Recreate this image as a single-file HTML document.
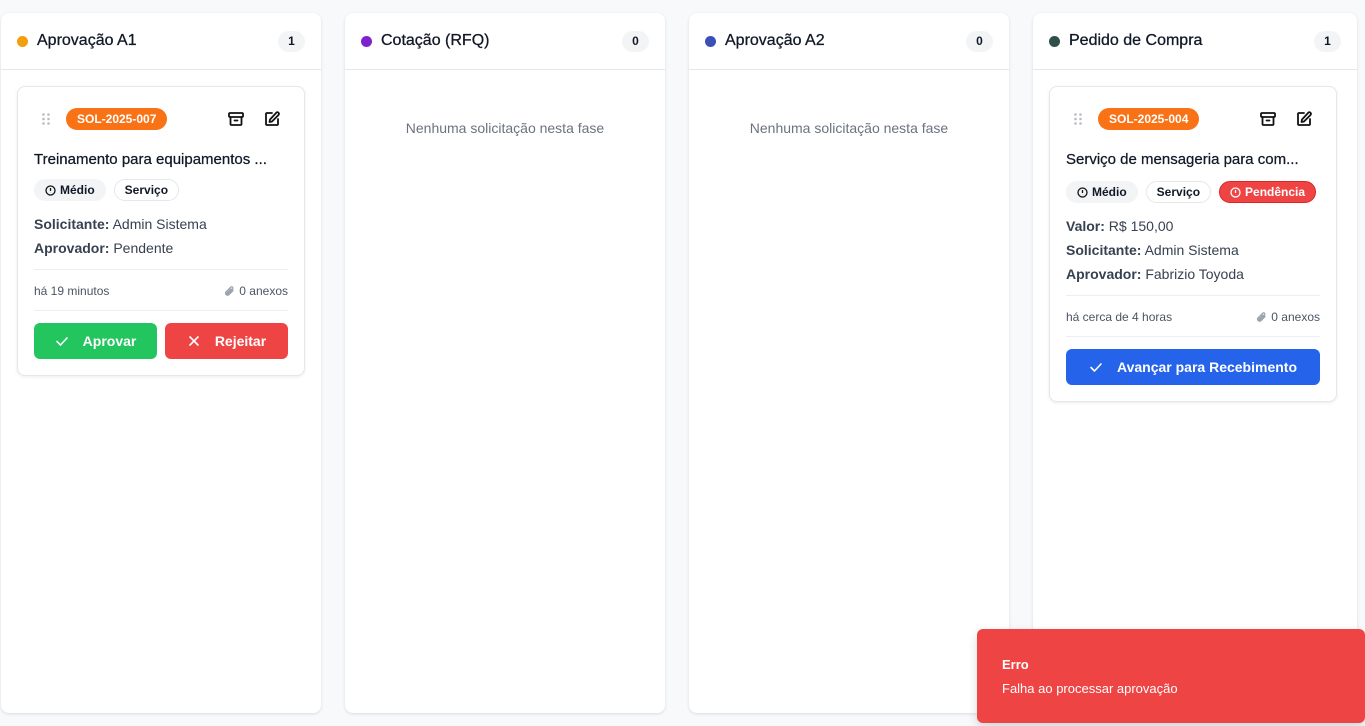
<!DOCTYPE html>
<html><head><meta charset="utf-8"><style>
*{box-sizing:border-box;margin:0;padding:0}
body{width:1365px;height:726px;background:#f8f9fb;font-family:"Liberation Sans",sans-serif;position:relative;overflow:hidden;color:#111827}
.col{position:absolute;top:13px;width:320px;height:700px;background:#fff;border-radius:8px;box-shadow:0 1px 3px rgba(0,0,0,.12)}
.hd{height:57px;border-bottom:1px solid #e5e7eb;position:relative}
.dot{position:absolute;left:16px;top:23px;width:11px;height:11px;border-radius:50%}
.ttl{position:absolute;left:36px;top:19px;font-size:16px;font-weight:500;color:#111827;-webkit-text-stroke:.3px #111827}
.cnt{position:absolute;right:16px;top:18px;min-width:27px;height:21px;border-radius:11px;background:#f3f4f6;font-size:12px;font-weight:bold;text-align:center;line-height:21px}
.empty{position:absolute;top:107px;width:100%;text-align:center;font-size:14px;color:#6b7280}
.card{position:absolute;left:16px;top:73px;width:288px;background:#fff;border:1px solid #e5e7eb;border-radius:8px;box-shadow:0 1px 3px rgba(0,0,0,.08)}
.grip{position:absolute;left:24px;top:26px}
.id{position:absolute;left:48px;top:21px;height:22px;padding:0 11px;background:#f97316;color:#fff;border-radius:11px;font-size:12px;font-weight:bold;line-height:22px}
.ic{position:absolute;top:23px}
.name{position:absolute;left:16px;top:64px;font-size:15px;font-weight:500;-webkit-text-stroke:.25px #111827}
.tags{position:absolute;left:16px;top:92px;display:flex;gap:8px}
.tag{height:22px;border-radius:11px;padding:0 10px;font-size:12px;font-weight:bold;line-height:20px;border:1px solid #e5e7eb;background:#fff;display:flex;align-items:center;gap:4px}
.tag.g{background:#f3f4f6;border-color:#f3f4f6}
.tag.r{background:#ef4444;border-color:#dc2626;color:#fff}
.ln{position:absolute;left:16px;font-size:14px;color:#374151}
.ln b{color:#374151}
.hr{position:absolute;left:16px;right:16px;height:1px;background:#eceef1}
.meta{position:absolute;left:16px;right:16px;font-size:12px;color:#4b5563;display:flex;justify-content:space-between}
.meta span{display:flex;align-items:center;gap:4px}
.btn{position:absolute;height:36px;border-radius:6px;color:#fff;font-size:14px;font-weight:bold;display:flex;align-items:center;justify-content:center;gap:14px}
.toast{position:absolute;left:977px;top:629px;width:388px;height:94px;background:#ef4444;border-radius:6px;color:#fff;box-shadow:0 4px 10px rgba(0,0,0,.15)}
</style></head><body>
<svg width="0" height="0" style="position:absolute"><defs>
<g id="grip"><circle cx="1.5" cy="1.5" r="1.3"/><circle cx="6.5" cy="1.5" r="1.3"/><circle cx="1.5" cy="6" r="1.3"/><circle cx="6.5" cy="6" r="1.3"/><circle cx="1.5" cy="10.5" r="1.3"/><circle cx="6.5" cy="10.5" r="1.3"/></g>
<g id="arch" fill="none" stroke="#111" stroke-width="1.8" stroke-linecap="round" stroke-linejoin="round"><rect x="2" y="3" width="14" height="4" rx="1"/><path d="M3.5 7v7a1 1 0 0 0 1 1h9a1 1 0 0 0 1-1V7M7.5 10.5h3"/></g>
<g id="edit" fill="none" stroke="#111" stroke-width="1.8" stroke-linecap="round" stroke-linejoin="round"><path d="M9 3H4a1 1 0 0 0-1 1v10a1 1 0 0 0 1 1h10a1 1 0 0 0 1-1V9"/><path d="M13.5 2.5a1.6 1.6 0 0 1 2.2 2.2L9 11.5 6.5 12l.5-2.5z"/></g>
<g id="al" fill="none" stroke-width="1.3"><circle cx="5.5" cy="5.5" r="4.5"/><path d="M5.5 3v3M5.5 7.8v.1"/></g>
<g id="clip" fill="none" stroke="#9ca3af" stroke-width="1.3" stroke-linecap="round"><path d="M10 5.5 5.8 9.7a2 2 0 0 1-2.8-2.8L7.6 2.3a1.3 1.3 0 0 1 1.9 1.9L5 8.7a.6.6 0 0 1-.9-.9L8 4"/></g>
<g id="chk" fill="none" stroke="#fff" stroke-width="1.6" stroke-linecap="round" stroke-linejoin="round"><path d="M2 7.5l3.5 3.5L12 4"/></g>
<g id="x" fill="none" stroke="#fff" stroke-width="1.6" stroke-linecap="round"><path d="M3 3l8 8M11 3l-8 8"/></g>
</defs></svg>

<div class="col" style="left:1px">
 <div class="hd"><span class="dot" style="background:#f59e0b"></span><span class="ttl">Aprovação A1</span><span class="cnt">1</span></div>
 <div class="card" style="height:290px">
  <svg class="grip" width="8" height="12" fill="#b8bcc4"><use href="#grip"/></svg>
  <span class="id">SOL-2025-007</span>
  <svg class="ic" style="left:209px" width="18" height="18"><use href="#arch"/></svg>
  <svg class="ic" style="left:245px" width="18" height="18"><use href="#edit"/></svg>
  <div class="name">Treinamento para equipamentos ...</div>
  <div class="tags"><span class="tag g"><svg width="11" height="11" stroke="#111"><use href="#al"/></svg>Médio</span><span class="tag">Serviço</span></div>
  <div class="ln" style="top:129px"><b>Solicitante:</b> Admin Sistema</div>
  <div class="ln" style="top:153px"><b>Aprovador:</b> Pendente</div>
  <div class="hr" style="top:182px"></div>
  <div class="meta" style="top:197px"><span>há 19 minutos</span><span><svg width="12" height="12"><use href="#clip"/></svg>0 anexos</span></div>
  <div class="hr" style="top:223px"></div>
  <div class="btn" style="left:16px;top:236px;width:123px;background:#22c55e"><svg width="14" height="14"><use href="#chk"/></svg>Aprovar</div>
  <div class="btn" style="left:147px;top:236px;width:123px;background:#ef4444"><svg width="14" height="14"><use href="#x"/></svg>Rejeitar</div>
 </div>
</div>

<div class="col" style="left:345px">
 <div class="hd"><span class="dot" style="background:#7e22ce"></span><span class="ttl">Cotação (RFQ)</span><span class="cnt">0</span></div>
 <div class="empty">Nenhuma solicitação nesta fase</div>
</div>

<div class="col" style="left:689px">
 <div class="hd"><span class="dot" style="background:#3b4fb8"></span><span class="ttl">Aprovação A2</span><span class="cnt">0</span></div>
 <div class="empty">Nenhuma solicitação nesta fase</div>
</div>

<div class="col" style="left:1033px;width:324px">
 <div class="hd"><span class="dot" style="background:#2f4f4a"></span><span class="ttl">Pedido de Compra</span><span class="cnt">1</span></div>
 <div class="card" style="height:316px">
  <svg class="grip" width="8" height="12" fill="#b8bcc4"><use href="#grip"/></svg>
  <span class="id">SOL-2025-004</span>
  <svg class="ic" style="left:209px" width="18" height="18"><use href="#arch"/></svg>
  <svg class="ic" style="left:245px" width="18" height="18"><use href="#edit"/></svg>
  <div class="name">Serviço de mensageria para com...</div>
  <div class="tags" style="top:94px"><span class="tag g"><svg width="11" height="11" stroke="#111"><use href="#al"/></svg>Médio</span><span class="tag">Serviço</span><span class="tag r"><svg width="11" height="11" stroke="#fff"><use href="#al"/></svg>Pendência</span></div>
  <div class="ln" style="top:131px"><b>Valor:</b> R$ 150,00</div>
  <div class="ln" style="top:155px"><b>Solicitante:</b> Admin Sistema</div>
  <div class="ln" style="top:179px"><b>Aprovador:</b> Fabrizio Toyoda</div>
  <div class="hr" style="top:208px"></div>
  <div class="meta" style="top:223px"><span>há cerca de 4 horas</span><span><svg width="12" height="12"><use href="#clip"/></svg>0 anexos</span></div>
  <div class="hr" style="top:249px"></div>
  <div class="btn" style="left:16px;top:262px;width:254px;background:#2563eb"><svg width="14" height="14"><use href="#chk"/></svg>Avançar para Recebimento</div>
 </div>
</div>

<div class="toast">
 <div style="position:absolute;left:25px;top:28px;font-size:13px;font-weight:bold">Erro</div>
 <div style="position:absolute;left:25px;top:52px;font-size:13px">Falha ao processar aprovação</div>
</div>
</body></html>
